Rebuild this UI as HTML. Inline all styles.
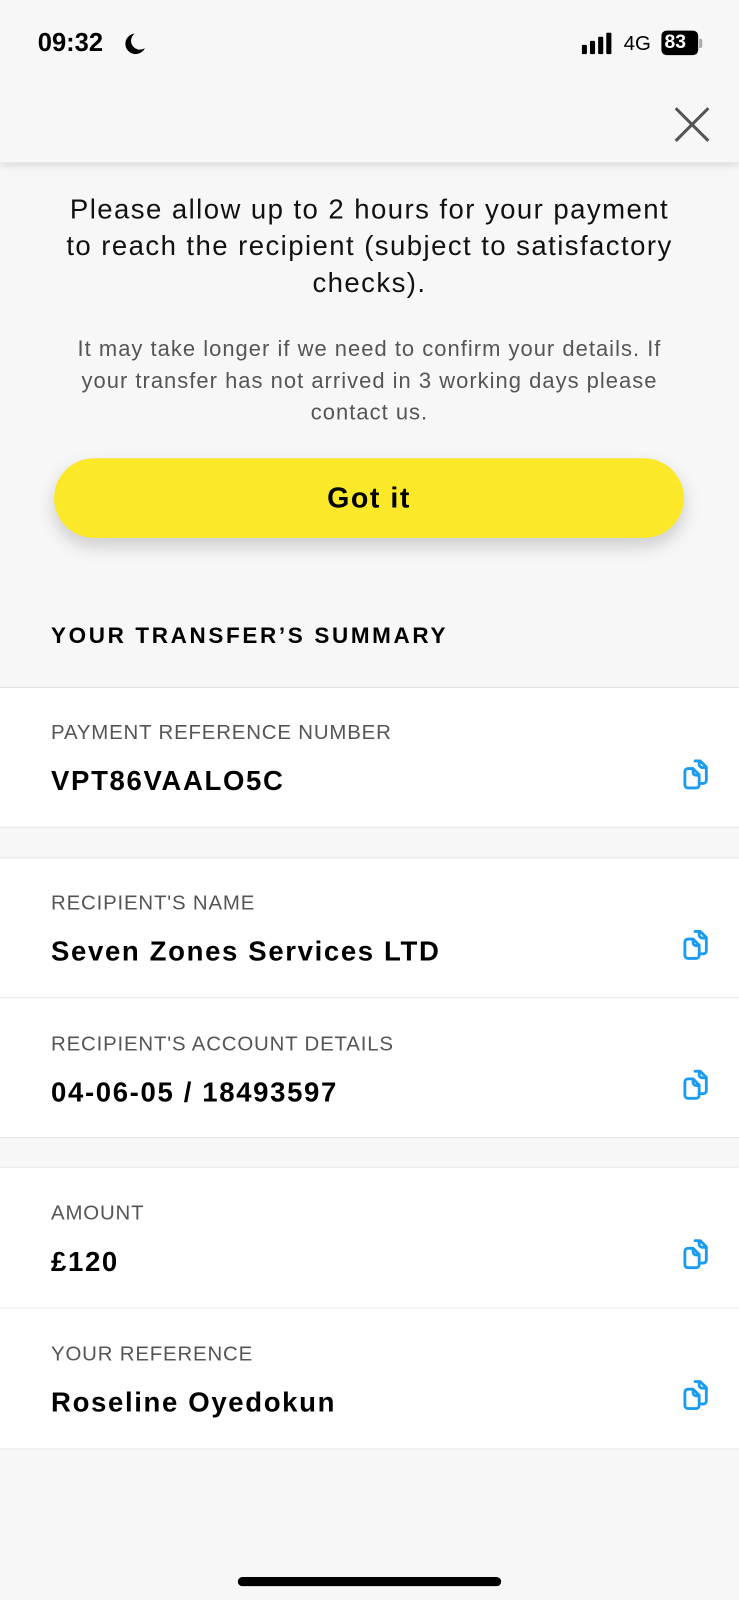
<!DOCTYPE html>
<html><head><meta charset="utf-8"><style>
*{margin:0;padding:0;box-sizing:border-box}
body{width:739px;height:1600px;background:#f7f7f7;font-family:"Liberation Sans",sans-serif;position:relative;overflow:hidden;color:#000}
#w{position:absolute;left:0;top:0;width:724px;height:1568px;transform:scale(1.0207);transform-origin:0 0}
.hdr{position:absolute;left:0;top:0;width:724px;height:159px;background:#f7f7f7;box-shadow:0 3px 8px rgba(0,0,0,.12);z-index:2}
.abs{position:absolute}
.main{position:absolute;top:187px;left:0;width:724px;text-align:center;font-size:27px;line-height:36px;color:#111;letter-spacing:1.4px;white-space:nowrap}
.small{position:absolute;top:327px;left:0;width:724px;text-align:center;font-size:21.5px;line-height:31px;color:#555;letter-spacing:1px;white-space:nowrap}
.btn{position:absolute;left:53px;top:449px;width:617px;height:78px;border-radius:39px;background:#fbe829;box-shadow:0 8px 18px rgba(0,0,0,.18);text-align:center;line-height:78px;font-weight:bold;font-size:28px;letter-spacing:1.5px}
.sum{position:absolute;left:50px;top:610px;font-weight:bold;font-size:22px;letter-spacing:2.6px}
.card{position:absolute;left:0;width:724px;background:#fff;border-top:1px solid #e4e4e4;border-bottom:1px solid #e4e4e4}
.lbl{position:absolute;left:50px;font-size:20px;color:#555;letter-spacing:0.8px}
.val{position:absolute;left:50px;font-size:27px;font-weight:bold;letter-spacing:1.6px}
.ic{position:absolute;left:669px}
</style></head><body><div id="w">
<div class="hdr">
<div class="abs" style="left:37px;top:28px;font-size:25px;font-weight:bold">09:32</div>
<svg class="abs" style="left:120px;top:31px" width="24" height="24" viewBox="0 0 24 24"><path d="M12 2A10 10 0 1 0 22 16 8 8 0 0 1 12 2z" fill="#000"/></svg>
<svg class="abs" style="left:570px;top:32px" width="34" height="22"><rect x="0" y="12" width="5" height="9" rx="1"/><rect x="8" y="8" width="5" height="13" rx="1"/><rect x="16" y="4" width="5" height="17" rx="1"/><rect x="24" y="0" width="5" height="21" rx="1"/></svg>
<div class="abs" style="left:611px;top:32px;font-size:20px">4G</div>
<div class="abs" style="left:648px;top:30px;width:36px;height:24px;background:#000;border-radius:5px;color:#fff;font-size:19px;font-weight:bold;line-height:24px;padding-left:3px">83</div>
<div class="abs" style="left:685px;top:38px;width:3px;height:9px;background:#aaa;border-radius:0 2px 2px 0"></div>
<svg class="abs" style="left:660px;top:104px" width="36" height="36"><path d="M2 2L34 34M34 2L2 34" stroke="#555" stroke-width="3"/></svg>
</div>
<div class="main">Please allow up to 2 hours for your payment<br>to reach the recipient (subject to satisfactory<br>checks).</div>
<div class="small">It may take longer if we need to confirm your details. If<br>your transfer has not arrived in 3 working days please<br>contact us.</div>
<div class="btn">Got it</div>
<div class="sum">YOUR TRANSFER’S SUMMARY</div>

<div class="card" style="top:673px;height:138px"></div>
<div class="card" style="top:840px;height:138px"></div>
<div class="card" style="top:977px;height:138px;border-top:1px solid #e8e8e8"></div>
<div class="card" style="top:1143px;height:139px"></div>
<div class="card" style="top:1281px;height:139px;border-top:1px solid #e8e8e8"></div>

<div class="lbl" style="top:707px">PAYMENT REFERENCE NUMBER</div>
<div class="val" style="top:750px">VPT86VAALO5C</div>
<div class="lbl" style="top:874px">RECIPIENT'S NAME</div>
<div class="val" style="top:917px">Seven Zones Services LTD</div>
<div class="lbl" style="top:1012px">RECIPIENT'S ACCOUNT DETAILS</div>
<div class="val" style="top:1055px">04-06-05 / 18493597</div>
<div class="lbl" style="top:1178px">AMOUNT</div>
<div class="val" style="top:1221px">£120</div>
<div class="lbl" style="top:1316px">YOUR REFERENCE</div>
<div class="val" style="top:1359px">Roseline Oyedokun</div>

<svg width="0" height="0" style="position:absolute"><defs><g id="cp" fill="none" stroke="#1a9bf0" stroke-width="2.8" stroke-linejoin="round" stroke-linecap="round"><path d="M12 2.5h5l6 6v13a3 3 0 0 1-3 3h-2"/><path d="M16 3v3a3 3 0 0 0 3 3h3"/><path d="M5 10h5l6 6v10a3 3 0 0 1-3 3H5a3 3 0 0 1-3-3V13a3 3 0 0 1 3-3z"/><path d="M10 10.5v3a3 3 0 0 0 3 3h2.5"/></g></defs></svg>
<svg class="ic" style="top:743px" width="26" height="32" viewBox="0 0 26 32"><use href="#cp"/></svg>
<svg class="ic" style="top:910px" width="26" height="32" viewBox="0 0 26 32"><use href="#cp"/></svg>
<svg class="ic" style="top:1047px" width="26" height="32" viewBox="0 0 26 32"><use href="#cp"/></svg>
<svg class="ic" style="top:1213px" width="26" height="32" viewBox="0 0 26 32"><use href="#cp"/></svg>
<svg class="ic" style="top:1351px" width="26" height="32" viewBox="0 0 26 32"><use href="#cp"/></svg>

<div class="abs" style="left:233px;top:1545px;width:258px;height:9px;border-radius:5px;background:#000"></div>
</div></body></html>
